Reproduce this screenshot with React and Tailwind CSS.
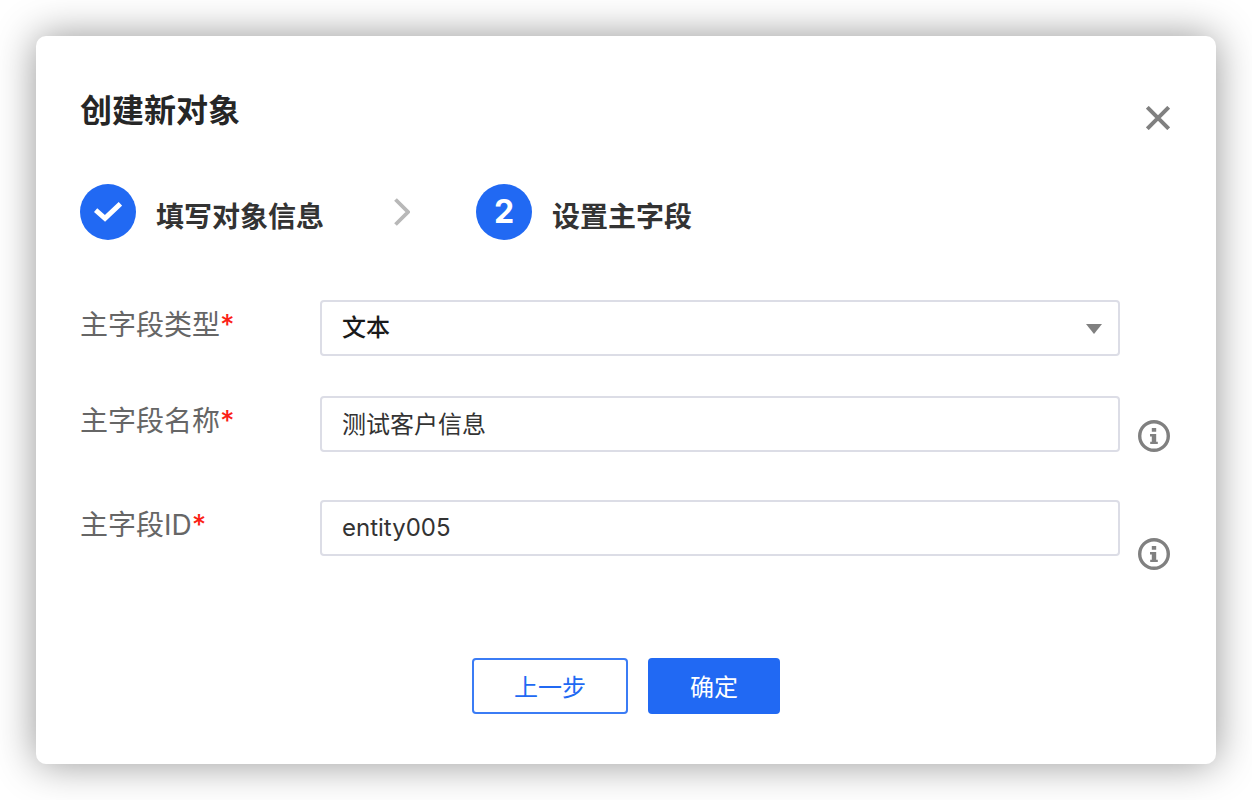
import { useState } from 'react'

const FIELD = 'h-14 w-full rounded-sm border-2 border-[#dcdde6] bg-white px-5 text-2xl outline-none focus:border-[#2169f3]'

const TYPE_OPTIONS = ['文本', '自动编号']

function InfoButton({ label }) {
  return (
    <button type="button" aria-label={label} className="size-8 self-end justify-self-end text-[#808080]">
      <svg viewBox="0 0 32 32" className="size-8" fill="none">
        <circle cx="16" cy="16" r="14.3" stroke="currentColor" strokeWidth="3.4" />
        <path d="M13.8 8h4.4v3.8h-4.4zM12 14h6.2v7.8h1.6V24h-7.6v-2.2h1.6v-5.4H12z" fill="currentColor" />
      </svg>
    </button>
  )
}

function Row({ id, label, children }) {
  return (
    <div className="grid grid-cols-[240px_1fr_50px] items-start">
      <label htmlFor={id} className="text-[28px] leading-[50px] text-[#666]">
        {label}
        <span className="font-medium text-[#fb1f17]">*</span>
      </label>
      {children}
    </div>
  )
}

function Step({ badge, title }) {
  return (
    <li className="flex items-center gap-5">
      <span className="flex size-14 items-center justify-center rounded-full bg-[#2169f3] text-[32px] font-bold text-white">
        {badge}
      </span>
      <span className="pt-2.5 text-[28px] leading-9 font-bold text-[#333]">{title}</span>
    </li>
  )
}

export default function App() {
  const [type, setType] = useState(TYPE_OPTIONS[0])
  const [name, setName] = useState('测试客户信息')
  const [fieldId, setFieldId] = useState('entity005')

  return (
    <div className="min-h-screen bg-white p-9 font-['Inter','Noto_Sans_CJK_SC',sans-serif]">
      <section
        role="dialog"
        aria-labelledby="dialog-title"
        className="rounded-[10px] bg-white pt-12 pr-[46px] pb-[50px] pl-11 shadow-[0_0_40px_rgba(0,0,0,0.42)]"
      >
        <header className="flex items-start justify-between">
          <h1 id="dialog-title" className="text-[32px] leading-[54px] font-bold text-[#262626]">创建新对象</h1>
          <button type="button" aria-label="关闭" className="mt-[22px] text-[#808080]">
            <svg viewBox="0 0 24 24" className="size-6" fill="none" stroke="currentColor" strokeWidth="4">
              <path d="M1.3 1.3 22.7 22.7M22.7 1.3 1.3 22.7" />
            </svg>
          </button>
        </header>

        <ol className="mt-[46px] flex items-center">
          <Step
            badge={
              <svg viewBox="0 0 28 20" className="h-5 w-7" fill="none" stroke="currentColor" strokeWidth="5">
                <path d="M1.6 8.2 11 16.4 26.4 1.8" />
              </svg>
            }
            title="填写对象信息"
          />
          <li aria-hidden="true" className="mr-[66px] ml-[70px] text-[#b8b8b8]">
            <svg viewBox="0 0 16 28" className="h-7 w-4" fill="none" stroke="currentColor" strokeWidth="3.8">
              <path d="M1.5 1.5 14 14 1.5 26.5" />
            </svg>
          </li>
          <Step badge="2" title="设置主字段" />
        </ol>

        <form className="mt-15" onSubmit={(e) => e.preventDefault()}>
          <Row id="field-type" label="主字段类型">
            <div className="relative">
              <select
                id="field-type"
                value={type}
                onChange={(e) => setType(e.target.value)}
                className={`${FIELD} appearance-none font-medium text-[#1a1a1a]`}
              >
                {TYPE_OPTIONS.map((t) => (
                  <option key={t}>{t}</option>
                ))}
              </select>
              <svg viewBox="0 0 16 10" className="pointer-events-none absolute top-6 right-[18px] h-2.5 w-4 text-[#808080]">
                <path d="M0 0h16L8 10z" fill="currentColor" />
              </svg>
            </div>
          </Row>

          <div className="mt-10">
            <Row id="field-name" label="主字段名称">
              <input
                id="field-name"
                type="text"
                value={name}
                onChange={(e) => setName(e.target.value)}
                className={`${FIELD} pb-1 text-[#333]`}
              />
              <InfoButton label="名称说明" />
            </Row>
          </div>

          <div className="mt-12">
            <Row id="field-id" label="主字段ID">
              <input
                id="field-id"
                type="text"
                value={fieldId}
                onChange={(e) => setFieldId(e.target.value)}
                className={`${FIELD} mb-3.5 pb-0.5 text-[#333]`}
              />
              <InfoButton label="ID说明" />
            </Row>
          </div>

          <div className="mt-22 flex justify-center gap-5 pl-0.5">
            <button type="button" className="h-14 rounded-sm border-2 border-[#3b7cf5] px-10 pt-1 text-2xl text-[#2169f3]">
              上一步
            </button>
            <button type="submit" className="h-14 rounded-sm bg-[#2169f3] px-[42px] pt-1 text-2xl text-white">
              确定
            </button>
          </div>
        </form>
      </section>
    </div>
  )
}
